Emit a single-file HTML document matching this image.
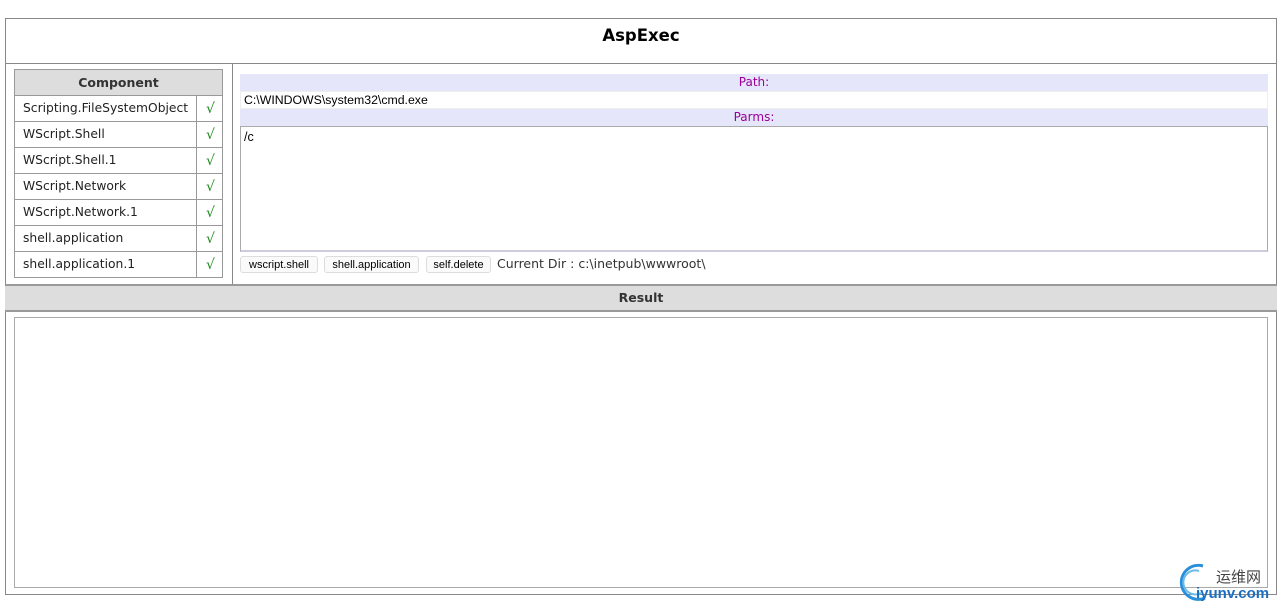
<!DOCTYPE html><html><head><style>
body{margin:0;width:1280px;height:610px;background:#fff;position:relative;font-family:Verdana,"DejaVu Sans",sans-serif;overflow:hidden}
.a{position:absolute;box-sizing:border-box}
.b{border:1px solid #999}
.row{position:absolute;left:14px;width:209px;height:26px;border:1px solid #999;border-top:none;box-sizing:border-box;font-size:12.3px;color:#222}
.row span{position:absolute;left:8px;top:5px}
.row i{position:absolute;left:181px;top:0;height:25px;border-left:1px solid #999;width:27px;color:#1a8a1a;font-style:normal;text-align:center;line-height:27px;font-size:14px}
.lav{background:#e6e6fa;color:#909;font-size:12px;text-align:center;font-family:"DejaVu Sans",sans-serif}
.btn{position:absolute;top:256px;height:17px;border:1px solid #ddd;border-radius:3px;background:#fafafa;font-family:"Liberation Sans",sans-serif;font-size:11px;line-height:17px;text-align:center;box-sizing:border-box}
</style></head><body>
<div class="a b" style="left:5px;top:18px;width:1272px;height:577px;border-color:#888"></div>
<div class="a" style="left:5px;top:18px;width:1272px;height:46px;border-bottom:1px solid #888;text-align:center;font-weight:bold;font-size:16.5px;line-height:36px">AspExec</div>
<div class="a" style="left:232px;top:64px;width:1px;height:221px;background:#888"></div>
<div class="a" style="left:5px;top:284px;width:1272px;height:28px;background:#ddd;border-top:2px solid #999;border-bottom:2px solid #999;text-align:center;font-weight:bold;font-size:12.5px;line-height:24px;color:#333">Result</div>
<div class="a" style="left:14px;top:69px;width:209px;height:27px;background:#ddd;border:1px solid #999;text-align:center;font-weight:bold;font-size:12.5px;line-height:26px;color:#333">Component</div>
<div class="row" style="top:96px"><span>Scripting.FileSystemObject</span><i>√</i></div>
<div class="row" style="top:122px"><span>WScript.Shell</span><i>√</i></div>
<div class="row" style="top:148px"><span>WScript.Shell.1</span><i>√</i></div>
<div class="row" style="top:174px"><span>WScript.Network</span><i>√</i></div>
<div class="row" style="top:200px"><span>WScript.Network.1</span><i>√</i></div>
<div class="row" style="top:226px"><span>shell.application</span><i>√</i></div>
<div class="row" style="top:252px"><span>shell.application.1</span><i>√</i></div>
<div class="a lav" style="left:240px;top:74px;width:1028px;height:17px;line-height:17px">Path:</div>
<div class="a" style="left:240px;top:91px;width:1028px;height:18px;border:1px solid #eee;font-family:'Liberation Sans',sans-serif;font-size:12.3px;line-height:17px;padding-left:3px">C:\WINDOWS\system32\cmd.exe</div>
<div class="a lav" style="left:240px;top:109px;width:1028px;height:17px;line-height:17px">Parms:</div>
<div class="a" style="left:240px;top:126px;width:1028px;height:126px;border:1px solid #aaa;border-bottom:2px solid #ccd;font-family:'Liberation Sans',sans-serif;font-size:12.5px;padding:3px">/c</div>
<div class="btn" style="left:240px;width:78px">wscript.shell</div>
<div class="btn" style="left:324px;width:95px">shell.application</div>
<div class="btn" style="left:426px;width:65px">self.delete</div>
<div class="a" style="left:497px;top:256px;font-size:12.5px;color:#333">Current Dir : c:\inetpub\wwwroot\</div>
<div class="a" style="left:14px;top:317px;width:1254px;height:271px;border:1px solid #aaa"></div>
<svg class="a" style="left:1175px;top:562px" width="40" height="40"><path d="M28 4 A17 17 0 1 0 30 36" fill="none" stroke="#2a8fd8" stroke-width="3"/><path d="M24 9 A12 12 0 1 0 26 31" fill="none" stroke="#6bbbe8" stroke-width="2"/></svg>
<div class="a" style="left:1216px;top:566px;font-family:'Noto Sans CJK SC',sans-serif;font-size:15px;color:#444">运维网</div>
<div class="a" style="left:1196px;top:585px;font-family:'Liberation Sans',sans-serif;font-size:15px;color:#1a6fc0;font-weight:bold">iyunv.com</div>
</body></html>
